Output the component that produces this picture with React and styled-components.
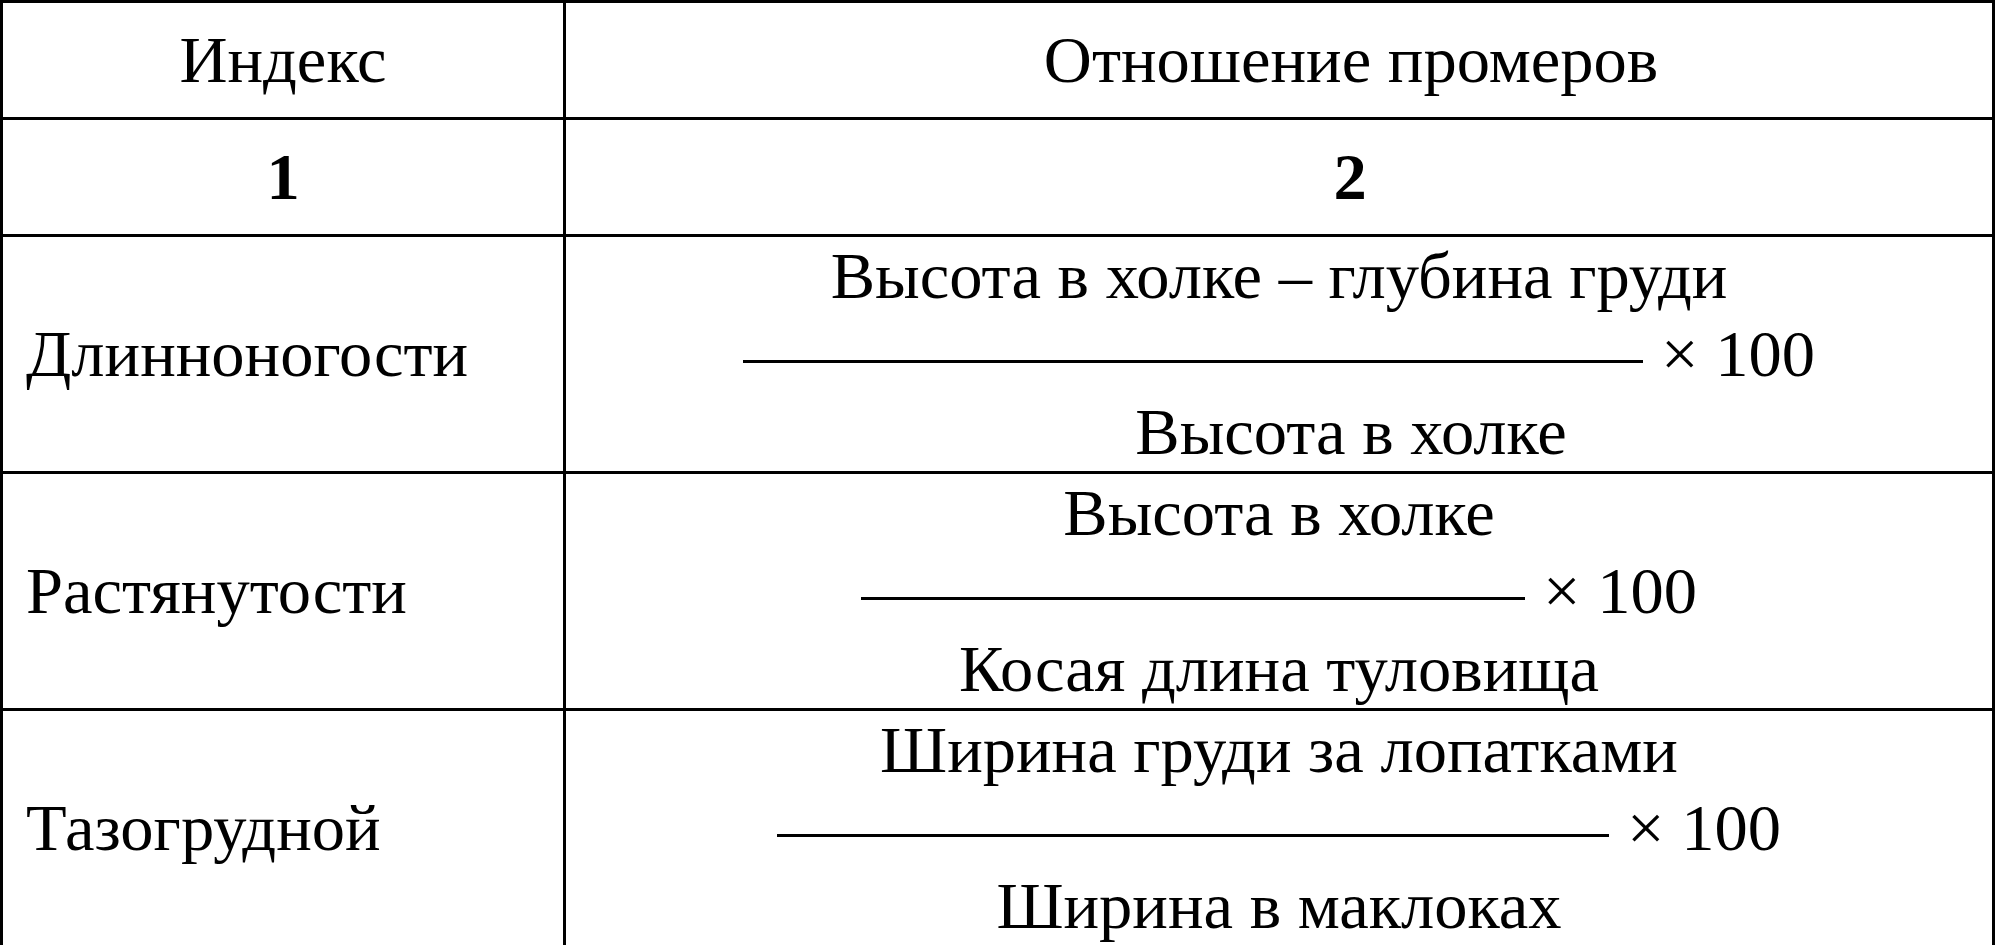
import React from 'react';
import styled, { createGlobalStyle } from 'styled-components';

const Global = createGlobalStyle`
  html, body {
    margin: 0;
    padding: 0;
    background: #fff;
  }
  body {
    width: 1996px;
    height: 949px;
    overflow: hidden;
    font-family: "Liberation Serif", "Times New Roman", serif;
    color: #000;
  }
`;

const Table = styled.div`
  display: grid;
  grid-template-columns: 563px 1fr;
  width: 1995px;
  margin: 0;
  border-top: 3px solid #000;
  border-left: 3px solid #000;
  box-sizing: border-box;
  font-size: 66.5px;
  line-height: 78px;
`;

const BaseCell = styled.div`
  display: flex;
  flex-direction: column;
  justify-content: center;
  border-right: 3px solid #000;
  border-bottom: ${(p) => (p.$last ? '0' : '3px solid #000')};
  box-sizing: border-box;
  white-space: nowrap;
`;

const HeadCell = styled(BaseCell)`
  align-items: center;
  padding: 18px 0 18px;
  font-weight: ${(p) => (p.$bold ? 700 : 400)};
`;

const NameCell = styled(BaseCell)`
  align-items: flex-start;
  padding: 0 0 0 23px;
`;

const FormulaCell = styled(BaseCell)`
  align-items: center;
  padding: 0;
`;

const Line = styled.div`
  padding-left: ${(p) => p.$shift || 0}px;
`;

const Rule = styled.span`
  display: inline-block;
  width: ${(p) => p.$w}px;
  height: 3px;
  background: #000;
  vertical-align: 13px;
  margin-right: 18px;
`;

const rows = [
  {
    name: 'Длинноногости',
    num: 'Высота в холке – глубина груди',
    den: 'Высота в холке',
    w: 900,
    denShift: 144,
  },
  {
    name: 'Растянутости',
    num: 'Высота в холке',
    den: 'Косая длина туловища',
    w: 664,
    denShift: 0,
  },
  {
    name: 'Тазогрудной',
    num: 'Ширина груди за лопатками',
    den: 'Ширина в маклоках',
    w: 832,
    denShift: 0,
  },
];

export default function App() {
  return (
    <>
      <Global />
      <Table>
        <HeadCell>
          <Line>Индекс</Line>
        </HeadCell>
        <HeadCell>
          <Line $shift={144}>Отношение промеров</Line>
        </HeadCell>
        <HeadCell $bold>
          <Line>1</Line>
        </HeadCell>
        <HeadCell $bold>
          <Line $shift={142}>2</Line>
        </HeadCell>
        {rows.map((r, i) => {
          const last = i === rows.length - 1;
          return (
            <React.Fragment key={r.name}>
              <NameCell $last={last}>{r.name}</NameCell>
              <FormulaCell $last={last}>
                <Line>{r.num}</Line>
                <Line>
                  <Rule $w={r.w} />× 100
                </Line>
                <Line $shift={r.denShift}>{r.den}</Line>
              </FormulaCell>
            </React.Fragment>
          );
        })}
      </Table>
    </>
  );
}
